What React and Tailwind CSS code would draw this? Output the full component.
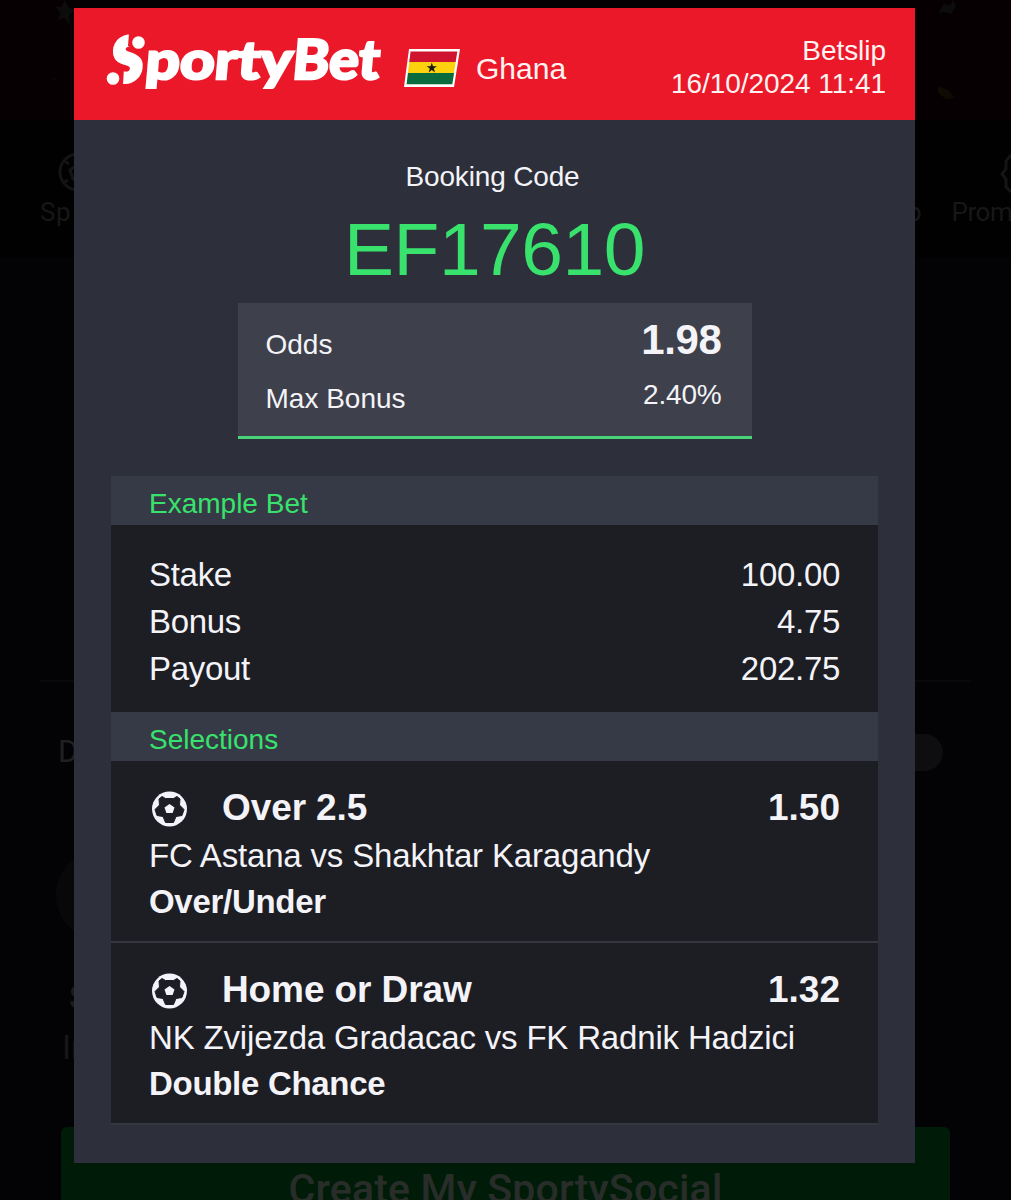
import React from 'react';

const stakeRows = [
  { label: 'Stake', value: '100.00' },
  { label: 'Bonus', value: '4.75' },
  { label: 'Payout', value: '202.75' },
];

const selections = [
  { pick: 'Over 2.5', odds: '1.50', match: 'FC Astana vs Shakhtar Karagandy', market: 'Over/Under' },
  { pick: 'Home or Draw', odds: '1.32', match: 'NK Zvijezda Gradacac vs FK Radnik Hadzici', market: 'Double Chance' },
];

const Logo = () => (
  <svg className="w-[280px] h-16 shrink-0" viewBox="0 0 280 64" fill="#fff">
    <g
      transform="translate(0 50) skewX(-5)"
      fontFamily="Lato, sans-serif"
      fontWeight="900"
      stroke="#fff"
      strokeWidth="2.4"
    >
      <text x="4" y="0" fontSize="60" strokeWidth="5" textLength="31" lengthAdjust="spacingAndGlyphs">S</text>
      <text x="38" y="-2" fontSize="53" textLength="147" lengthAdjust="spacingAndGlyphs">porty</text>
      <text x="185" y="-2" fontSize="55" textLength="87" lengthAdjust="spacingAndGlyphs">Bet</text>
    </g>
    <path d="M23 2H40V20H30L22 15Z" fill="#eb1829" />
    <path d="M0 32L9 32.500L18 37.500L16.500 60H0Z" fill="#eb1829" />
    <circle cx="32.500" cy="11.500" r="6.300" />
    <circle cx="7" cy="47.500" r="6.300" />
  </svg>
);

const GhanaFlag = () => (
  <svg className="w-[58px] h-10 shrink-0" viewBox="0 0 58 40">
    <path d="M6 1H57L51 39H1Z" fill="#fff" />
    <path d="M7.600 3.500H54.300L52.700 14H6.200Z" fill="#cf1430" />
    <path d="M6.200 14H52.700L51.100 25H4.900Z" fill="#fcd20e" />
    <path d="M4.900 25H51.100L49.300 36.300H3.600Z" fill="#0a6b3f" />
    <path d="M28.800 14.500l1.200 3.800h4l-3.200 2.300 1.200 3.800-3.200-2.300-3.200 2.300 1.200-3.800-3.200-2.300h4z" fill="#1a1a0a" />
  </svg>
);

const BallIcon = () => (
  <svg className="w-[37px] h-9 shrink-0" viewBox="0 0 36 36">
    <circle cx="18" cy="18" r="17.500" fill="#f3f3fb" />
    <path
      d="M10.500 5.500L14 7.500H22L25.500 5.500L28.500 8L28 14L32.500 18.500L30.500 24.500L24.500 25.500L22 31.500H14L11.500 25.500L5.500 24.500L3.500 18.500L8 14L7.500 8Z"
      fill="#1d1d25"
      stroke="#1d1d25"
      strokeLinejoin="round"
    />
    <path d="M18 13l5 3.500-1.900 5.500h-6.200L13 16.500z" fill="#f3f3fb" />
  </svg>
);

const SectionTitle = ({ children }) => (
  <h2 className="h-[49px] pt-[3px] px-[38px] bg-[#363946] text-[28px] leading-[49px] text-[#38e26c]">
    {children}
  </h2>
);

const Selection = ({ item }) => (
  <div className="h-[182px] px-[38px] pt-[23px] bg-[#1d1d24] border-b-2 border-[#363640]">
    <div className="flex items-center h-[47px] text-[37px] leading-[47px] font-bold">
      <div className="pl-0.5 pt-0.5">
        <BallIcon />
      </div>
      <span className="ml-[34px] tracking-[-0.1px]">{item.pick}</span>
      <span className="ml-auto">{item.odds}</span>
    </div>
    <p className="pt-px text-[33px] leading-[47px] tracking-[-0.17px] whitespace-nowrap">{item.match}</p>
    <p className="-mt-px text-[33px] leading-[47px] tracking-[-0.3px] font-bold">{item.market}</p>
  </div>
);

const Backdrop = () => (
  <div className="flex flex-col h-full bg-[#030305] font-[Roboto,sans-serif] text-[#171717]">
    <div className="h-[120px] bg-[#060002] flex justify-between px-[53px]">
      <svg className="w-6 h-24" viewBox="0 0 24 96">
        <path d="M2 6l6 1 4-7 4 8 6 2-6 5 1 9-6-6-6 2 2-7z" fill="#0c0c0d" />
        <path d="M-16 82Q-8 75 4 79Q-6 84-16 87Z" fill="#0d0903" />
      </svg>
      <svg className="w-8 h-28" viewBox="0 0 32 112">
        <path d="M18 4l6 1 3-5 3 6-5 8-6-2-7 1z" fill="#0c0c0d" />
        <path d="M12 86l10 4 7 8-9 1-8-6z" fill="#0d0b03" />
      </svg>
    </div>
    <div className="h-[138px] bg-[#010101] flex justify-between pl-10 pt-7 text-[26px] leading-8">
      <div className="w-20">
        <svg className="ml-4 mt-1 w-11 h-11" viewBox="0 0 44 44" fill="none" stroke="#141414" strokeWidth="3">
          <circle cx="22" cy="20" r="18" />
          <path d="M8 9l5 3M7 31l5-3M22 12l8 6-3 9H17l-3-9z" />
        </svg>
        <p className="tracking-[0.5px]">Sp</p>
      </div>
      <div className="flex gap-[26px] w-[104px] pt-12 whitespace-nowrap">
        <span>p</span>
        <div className="-mt-12 pl-1">
          <svg className="ml-12 mt-1 w-11 h-11" viewBox="0 0 44 44" fill="none" stroke="#151515" strokeWidth="3">
            <path d="M11 3L6 9v8l-4 5 4 5v8l5 5" />
          </svg>
          <p className="tracking-[-0.5px]">Prom</p>
        </div>
      </div>
    </div>
    <div className="mx-10 h-[424px] border-b-2 border-[#09090b]" />
    <div className="flex justify-between items-center h-[140px] pl-[58px] pr-[68px] text-[31px] text-[#202020]">
      <span>D</span>
      <span className="w-20 h-[37px] rounded-full bg-[#0e0e10]" />
    </div>
    <div className="ml-14 mt-7 w-[90px] h-[90px] rounded-full bg-[#080809]" />
    <p className="ml-[69px] mt-[35px] text-[34px] leading-[44px] font-bold text-[#1b1b1b]">S</p>
    <p className="ml-[62px] mt-[7px] text-[33px] leading-[44px]">In</p>
    <div className="mx-[61px] mt-[57px] h-[73px] pt-9 rounded-t-md bg-[#001c08] text-center text-[41px] leading-[52px] tracking-[0.2px] font-medium text-[#292d2a] overflow-hidden whitespace-nowrap">
      Create My SportySocial
    </div>
  </div>
);

const App = () => {
  return (
    <div className="relative w-[1011px] h-[1200px] overflow-hidden font-['Liberation_Sans',Arial,sans-serif] text-[#f3f3f8]">
      <Backdrop />

      <div className="absolute inset-0 pl-[74px] pt-2">
        <div className="w-[841px] h-[1155px] bg-[#2d2f3a]">
          <header className="flex h-28 bg-[#eb1829] pl-8 pr-[29px] text-[#fff3f2]">
            <div className="pt-[23px]">
              <Logo />
            </div>
            <div className="ml-[17px] pt-10">
              <GhanaFlag />
            </div>
            <span className="ml-[15px] pt-[41px] text-[30px] leading-10">Ghana</span>
            <div className="ml-auto pt-[26px] text-right text-[28px] leading-[33px] tracking-[-0.05px] whitespace-nowrap">
              <p>Betslip</p>
              <p>16/10/2024 11:41</p>
            </div>
          </header>

          <div className="flex flex-col items-center pt-10">
            <p className="mt-px text-[28px] leading-8 -ml-1 tracking-[-0.15px]">Booking Code</p>
            <p className="mt-4 text-[75px] leading-[80px] tracking-[-0.5px] text-[#38e26c]">EF17610</p>

            <div className="mt-3.5 flex justify-between w-[514px] h-[136px] pl-7 pr-[30px] bg-[#3e404b] border-b-[3px] border-[#4bd37b]">
              <div className="pt-[15px] text-[28px] leading-[54px]">
                <p>Odds</p>
                <p>Max Bonus</p>
              </div>
              <div className="pt-3 text-right">
                <p className="text-[42px] leading-[50px] tracking-[-0.4px] font-bold">1.98</p>
                <p className="text-[28px] leading-[60px] tracking-[-0.2px]">2.40%</p>
              </div>
            </div>

            <div className="mt-[37px] w-[767px]">
              <SectionTitle>Example Bet</SectionTitle>
              <div className="h-[187px] px-[38px] pt-[26px] bg-[#1d1d24] text-[33px] leading-[47px] tracking-[-0.3px]">
                {stakeRows.map((row) => (
                  <div key={row.label} className="flex justify-between">
                    <span>{row.label}</span>
                    <span>{row.value}</span>
                  </div>
                ))}
              </div>
              <SectionTitle>Selections</SectionTitle>
              {selections.map((item) => (
                <Selection key={item.pick} item={item} />
              ))}
            </div>
          </div>
        </div>
      </div>
    </div>
  );
};

export default App;
